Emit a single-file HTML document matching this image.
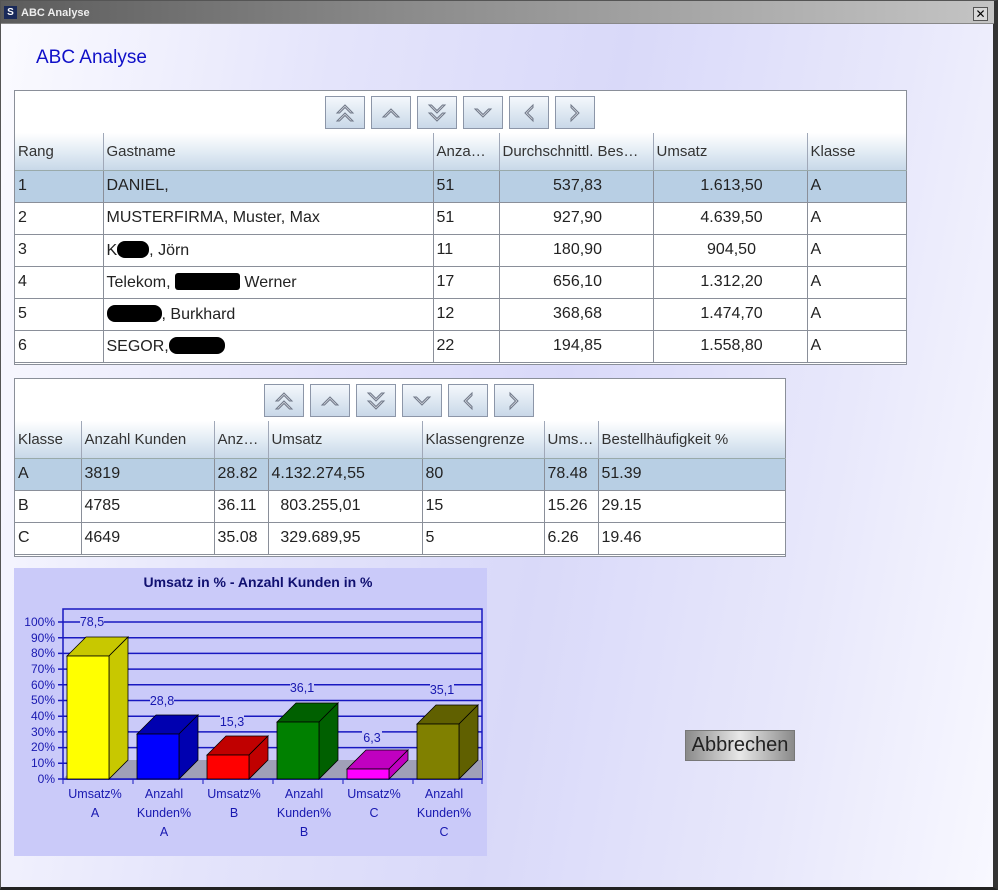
<!DOCTYPE html>
<html><head><meta charset="utf-8"><style>
*{margin:0;padding:0;box-sizing:border-box}
body{width:998px;height:890px;position:relative;overflow:hidden;font-family:"Liberation Sans",Arial,sans-serif;background:#fff}
#win{position:absolute;left:0;top:0;width:998px;height:890px;border:1px solid #555;border-right:5px solid #333;border-bottom:3px solid #222;
background:linear-gradient(100deg,#fbfbff 0%,#e4e4fb 30%,#d9d9f9 55%,#e8e8fb 80%,#f8f8ff 100%)}
#tb{position:absolute;left:0;top:0;width:993px;height:23px;background:linear-gradient(90deg,#5c5c5c,#8a8a8a 40%,#c4c4c4);border-bottom:1px solid #888}
#tb .ic{position:absolute;left:3px;top:5px;width:13px;height:13px;background:#1a2a5a;color:#fff;font-size:10px;font-weight:bold;text-align:center;line-height:13px}
#tb .t{position:absolute;left:20px;top:6px;color:#eee;font-size:11px;font-weight:bold;font-family:"Liberation Sans",sans-serif}
#tb .x{position:absolute;right:6px;top:6px;width:15px;height:14px;background:#d8d8d8;border:1px solid #555;font-size:12px;line-height:12px;text-align:center;color:#000}
h1{position:absolute;left:35px;top:46px;font-size:19px;font-weight:normal;color:#1010c8;font-family:"Liberation Sans",sans-serif}
.panel{position:absolute;background:#fff;border:1px solid #8a8f99}
.btns{position:absolute;display:flex;gap:6px}
.btn{width:40px;height:33px;border:1px solid #8c96a8;background:linear-gradient(#f4f8fc,#c9d8e8);display:flex;align-items:center;justify-content:center}
table{position:absolute;left:0;border-collapse:collapse;table-layout:fixed;font-size:16px;color:#222;font-family:"Liberation Sans",Arial,sans-serif}
th,td{font-family:"Liberation Sans",Arial,sans-serif}
th{height:37px;font-weight:normal;text-align:left;padding-left:3px;color:#333;font-size:15px;background:linear-gradient(#fff,#dde8f2 60%,#c8d8e8);border-left:1px solid #a0a8b8;border-bottom:1px solid #9aa}
td{height:32px;padding-left:3px;border:1px solid #8a8f99;white-space:nowrap;overflow:hidden}
tr.sel td{background:#b8cfe4}
th:first-child,td:first-child{border-left:none}
.r{text-align:center}
.blob{display:inline-block;background:#000;height:17px;border-radius:8px;vertical-align:-3px}
#ab{position:absolute;left:684px;top:729px;width:110px;height:31px;border:1px solid #777;background:linear-gradient(90deg,#8a8a8a,#e8e8e8 50%,#8a8a8a);font-size:20px;color:#222;text-align:center;line-height:29px;font-family:"Liberation Sans",sans-serif}
svg text{font-family:"Liberation Sans",Arial,sans-serif}
</style></head><body>
<div id="win">
<div id="tb"><div class="ic">S</div><div class="t">ABC Analyse</div><div class="x">✕</div></div>
<h1>ABC Analyse</h1>

<svg width="0" height="0" style="position:absolute"><defs>
<g id="up"><path d="M-8 4 L0 -4 L8 4 L5.5 4 L0 -1.5 L-5.5 4Z" fill="#d8dce4" stroke="#707888" stroke-width="1"/></g>
</defs></svg>

<div class="panel" style="left:13px;top:89px;width:893px;height:275px">
 <div class="btns" style="left:310px;top:5px">
  <div class="btn"><svg width="20" height="22" viewBox="-10 -11 20 22"><use href="#up" y="-4"/><use href="#up" y="4"/></svg></div>
  <div class="btn"><svg width="20" height="22" viewBox="-10 -11 20 22"><use href="#up"/></svg></div>
  <div class="btn"><svg width="20" height="22" viewBox="-10 -11 20 22" transform="scale(1,-1)"><use href="#up" y="-4"/><use href="#up" y="4"/></svg></div>
  <div class="btn"><svg width="20" height="22" viewBox="-10 -11 20 22" transform="scale(1,-1)"><use href="#up"/></svg></div>
  <div class="btn"><svg width="20" height="22" viewBox="-10 -11 20 22" transform="rotate(-90)"><use href="#up"/></svg></div>
  <div class="btn"><svg width="20" height="22" viewBox="-10 -11 20 22" transform="rotate(90)"><use href="#up"/></svg></div>
 </div>
 <table style="top:42px;width:891px">
  <colgroup><col style="width:88px"><col style="width:330px"><col style="width:66px"><col style="width:154px"><col style="width:154px"><col style="width:99px"></colgroup>
  <tr><th>Rang</th><th>Gastname</th><th>Anza…</th><th>Durchschnittl. Bes…</th><th>Umsatz</th><th>Klasse</th></tr>
  <tr class="sel"><td>1</td><td>DANIEL,</td><td>51</td><td class="r">537,83</td><td class="r">1.613,50</td><td>A</td></tr>
  <tr><td>2</td><td>MUSTERFIRMA, Muster, Max</td><td>51</td><td class="r">927,90</td><td class="r">4.639,50</td><td>A</td></tr>
  <tr><td>3</td><td>K<span class="blob" style="width:32px"></span>, Jörn</td><td>11</td><td class="r">180,90</td><td class="r">904,50</td><td>A</td></tr>
  <tr><td>4</td><td>Telekom, <span class="blob" style="width:65px;border-radius:3px"></span> Werner</td><td>17</td><td class="r">656,10</td><td class="r">1.312,20</td><td>A</td></tr>
  <tr><td>5</td><td><span class="blob" style="width:55px"></span>, Burkhard</td><td>12</td><td class="r">368,68</td><td class="r">1.474,70</td><td>A</td></tr>
  <tr><td>6</td><td>SEGOR,<span class="blob" style="width:56px"></span></td><td>22</td><td class="r">194,85</td><td class="r">1.558,80</td><td>A</td></tr>
 </table>
</div>

<div class="panel" style="left:13px;top:377px;width:772px;height:179px">
 <div class="btns" style="left:249px;top:5px">
  <div class="btn"><svg width="20" height="22" viewBox="-10 -11 20 22"><use href="#up" y="-4"/><use href="#up" y="4"/></svg></div>
  <div class="btn"><svg width="20" height="22" viewBox="-10 -11 20 22"><use href="#up"/></svg></div>
  <div class="btn"><svg width="20" height="22" viewBox="-10 -11 20 22" transform="scale(1,-1)"><use href="#up" y="-4"/><use href="#up" y="4"/></svg></div>
  <div class="btn"><svg width="20" height="22" viewBox="-10 -11 20 22" transform="scale(1,-1)"><use href="#up"/></svg></div>
  <div class="btn"><svg width="20" height="22" viewBox="-10 -11 20 22" transform="rotate(-90)"><use href="#up"/></svg></div>
  <div class="btn"><svg width="20" height="22" viewBox="-10 -11 20 22" transform="rotate(90)"><use href="#up"/></svg></div>
 </div>
 <table style="top:42px;width:770px">
  <colgroup><col style="width:66px"><col style="width:133px"><col style="width:54px"><col style="width:154px"><col style="width:122px"><col style="width:54px"><col style="width:187px"></colgroup>
  <tr><th>Klasse</th><th>Anzahl Kunden</th><th>Anz…</th><th>Umsatz</th><th>Klassengrenze</th><th>Ums…</th><th>Bestellhäufigkeit %</th></tr>
  <tr class="sel"><td>A</td><td>3819</td><td>28.82</td><td>4.132.274,55</td><td>80</td><td>78.48</td><td>51.39</td></tr>
  <tr><td>B</td><td>4785</td><td>36.11</td><td>&nbsp;&nbsp;803.255,01</td><td>15</td><td>15.26</td><td>29.15</td></tr>
  <tr><td>C</td><td>4649</td><td>35.08</td><td>&nbsp;&nbsp;329.689,95</td><td>5</td><td>6.26</td><td>19.46</td></tr>
 </table>
</div>

<svg style="position:absolute;left:13px;top:567px" width="473" height="288" viewBox="14 568 473 288">
<rect x="14" y="568" width="473" height="288" fill="#cacaf9"/>
<text x="258" y="587" text-anchor="middle" font-size="14" font-weight="bold" fill="#101070">Umsatz in % - Anzahl Kunden in %</text>
<rect x="63" y="609" width="419" height="170" fill="none" stroke="#1818c0" stroke-width="1.5"/>
<g stroke="#1818c0" stroke-width="1.5">
<line x1="58" y1="622.0" x2="482" y2="622.0"/><line x1="58" y1="637.7" x2="482" y2="637.7"/><line x1="58" y1="653.4" x2="482" y2="653.4"/><line x1="58" y1="669.1" x2="482" y2="669.1"/><line x1="58" y1="684.8" x2="482" y2="684.8"/><line x1="58" y1="700.5" x2="482" y2="700.5"/><line x1="58" y1="716.2" x2="482" y2="716.2"/><line x1="58" y1="731.9" x2="482" y2="731.9"/><line x1="58" y1="747.6" x2="482" y2="747.6"/><line x1="58" y1="763.3" x2="482" y2="763.3"/><line x1="58" y1="779" x2="482" y2="779"/>
</g>
<polygon points="63,779 82,760 482,760 482,779" fill="#a0a0b8"/>
<line x1="63" y1="779" x2="482" y2="779" stroke="#1818c0" stroke-width="1.5"/>
<g stroke="#1818c0"><line x1="133" y1="779" x2="133" y2="784"/><line x1="203" y1="779" x2="203" y2="784"/><line x1="273" y1="779" x2="273" y2="784"/><line x1="343" y1="779" x2="343" y2="784"/><line x1="413" y1="779" x2="413" y2="784"/><line x1="482" y1="779" x2="482" y2="784"/><line x1="63" y1="779" x2="63" y2="784"/></g>
<g font-size="12" fill="#1818b0" text-anchor="end">
<text x="55" y="626">100%</text><text x="55" y="642">90%</text><text x="55" y="657">80%</text><text x="55" y="673">70%</text><text x="55" y="689">60%</text><text x="55" y="704">50%</text><text x="55" y="720">40%</text><text x="55" y="736">30%</text><text x="55" y="751">20%</text><text x="55" y="767">10%</text><text x="55" y="783">0%</text>
</g>
<g stroke="#000" stroke-width="0.8">
<polygon points="67,656 86,637 128,637 109,656" fill="#c8c800"/><polygon points="109,656 128,637 128,760 109,779" fill="#c8c800"/><rect x="67" y="656" width="42" height="123" fill="#ffff00"/>
<polygon points="137,734 156,715 198,715 179,734" fill="#0000b0"/><polygon points="179,734 198,715 198,760 179,779" fill="#0000b0"/><rect x="137" y="734" width="42" height="45" fill="#0000ff"/>
<polygon points="207,755 226,736 268,736 249,755" fill="#c00000"/><polygon points="249,755 268,736 268,760 249,779" fill="#c00000"/><rect x="207" y="755" width="42" height="24" fill="#ff0000"/>
<polygon points="277,722 296,703 338,703 319,722" fill="#006000"/><polygon points="319,722 338,703 338,760 319,779" fill="#006000"/><rect x="277" y="722" width="42" height="57" fill="#008000"/>
<polygon points="347,769 366,750 408,750 389,769" fill="#c000c0"/><polygon points="389,769 408,750 408,760 389,779" fill="#c000c0"/><rect x="347" y="769" width="42" height="10" fill="#ff00ff"/>
<polygon points="417,724 436,705 478,705 459,724" fill="#606000"/><polygon points="459,724 478,705 478,760 459,779" fill="#606000"/><rect x="417" y="724" width="42" height="55" fill="#808000"/>
</g>
<g font-size="12.5" fill="#1818b0" text-anchor="middle">
<rect x="80" y="614" width="24" height="14" fill="#cacaf9"/><text x="92" y="626">78,5</text>
<rect x="150" y="692" width="24" height="14" fill="#cacaf9"/><text x="162" y="705">28,8</text>
<rect x="220" y="713" width="24" height="14" fill="#cacaf9"/><text x="232" y="726">15,3</text>
<rect x="290" y="679" width="24" height="14" fill="#cacaf9"/><text x="302" y="692">36,1</text>
<rect x="362" y="728" width="20" height="14" fill="#cacaf9"/><text x="372" y="742">6,3</text>
<rect x="430" y="681" width="24" height="14" fill="#cacaf9"/><text x="442" y="694">35,1</text>
<text x="95" y="798">Umsatz%</text><text x="95" y="817">A</text>
<text x="164" y="798">Anzahl</text><text x="164" y="817">Kunden%</text><text x="164" y="836">A</text>
<text x="234" y="798">Umsatz%</text><text x="234" y="817">B</text>
<text x="304" y="798">Anzahl</text><text x="304" y="817">Kunden%</text><text x="304" y="836">B</text>
<text x="374" y="798">Umsatz%</text><text x="374" y="817">C</text>
<text x="444" y="798">Anzahl</text><text x="444" y="817">Kunden%</text><text x="444" y="836">C</text>
</g>
</svg>

<div id="ab">Abbrechen</div>
</div>
</body></html>
